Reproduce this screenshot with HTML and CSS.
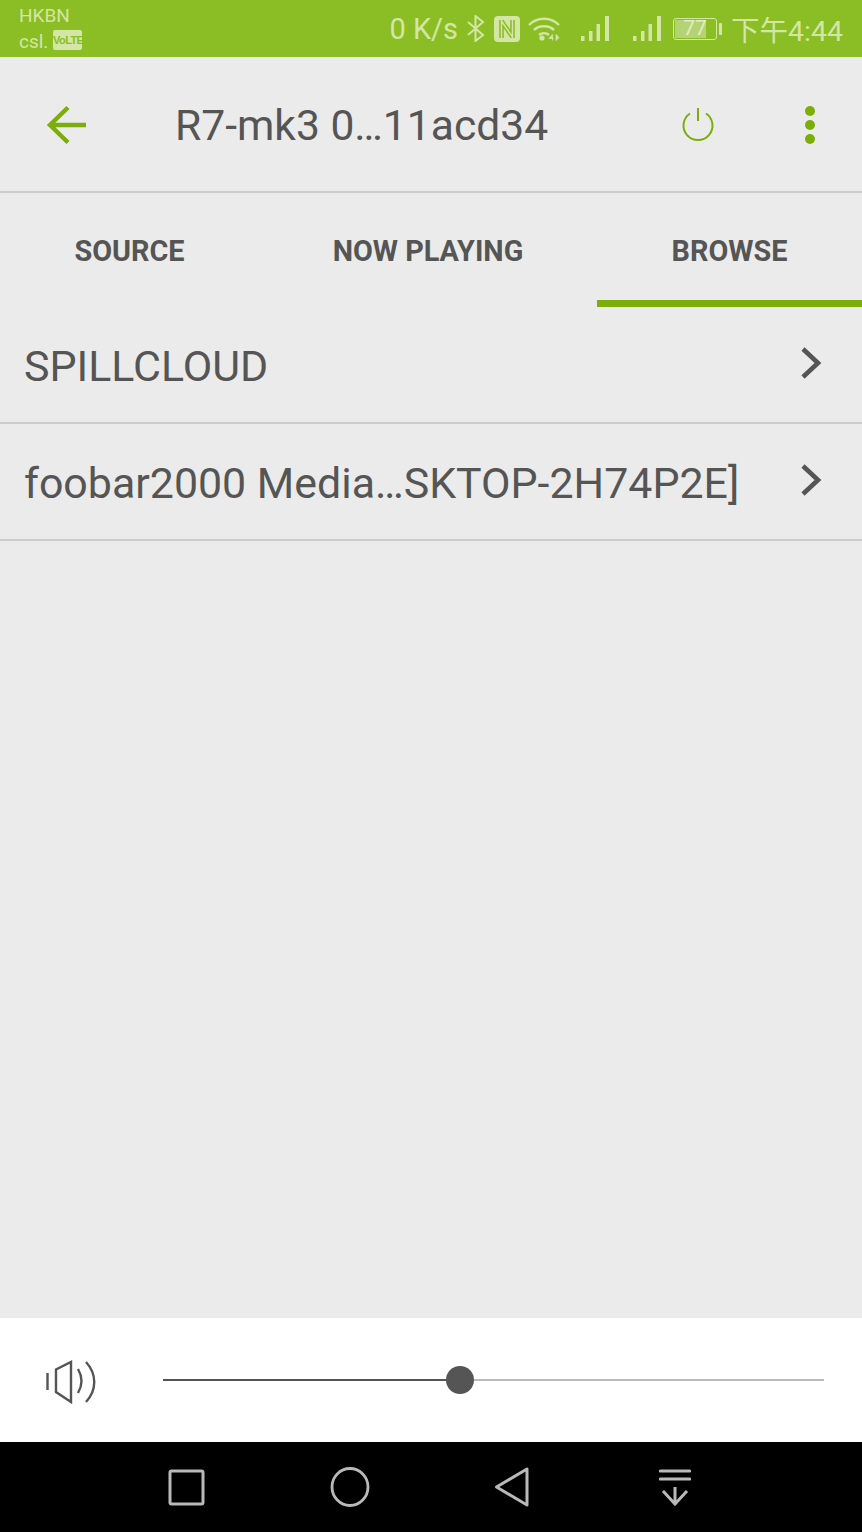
FILE: index.html
```html
<!DOCTYPE html>
<html lang="en">
<head>
<meta charset="UTF-8">
<title>R7-mk3 Browse</title>
<link rel="stylesheet" href="styles.css">
</head>
<body>
<div class="phone">

  <!-- status bar -->
  <div class="statusbar">
    <div class="carriers">
      <div class="carrier">HKBN</div>
      <div class="carrier">csl. <span class="volte">VoLTE</span></div>
    </div>
    <div class="status-right">
      <span class="speed">0 K/s</span>
      <svg class="ic-bt" width="19" height="27" viewBox="0 0 19 27"><path d="M2 7l15 13-7.500 6V1L17 7 2 20" fill="none" stroke="#d3e6a6" stroke-width="2"/></svg>
      <svg class="ic-nfc" width="26" height="26" viewBox="0 0 26 26"><rect width="26" height="26" rx="4" fill="#d3e6a6"/><path d="M7.500 4v18M18.500 4v18M7.500 5l11 16" fill="none" stroke="#8bbd25" stroke-width="4.600"/><path d="M7.500 3v20M18.500 3v20M7.500 5l11 16" fill="none" stroke="#d3e6a6" stroke-width="1.500"/></svg>
      <svg class="ic-wifi" width="32" height="24" viewBox="0 0 32 24"><path d="M1 8c8-8.500 22-8.500 30 0M6 13c5-5 15-5 20 0M11 18c3-2.500 7-2.500 10 0" fill="none" stroke="#d3e6a6" stroke-width="2.500"/><circle cx="14" cy="21" r="2.600" fill="#d3e6a6"/><path d="M24.500 23.500v-6l-3.500 4h4.500M28 17.500l3 3-3 3z" fill="#d3e6a6" stroke="#d3e6a6" stroke-width="0.800"/></svg>
      <svg class="ic-signal" width="28" height="25" viewBox="0 0 28 25"><path d="M0 20h3.500v5H0zM8 15h3.500v10H8zM15.500 8H19v17h-3.500zM24 0h4v25h-4z" fill="#d3e6a6"/></svg>
      <svg class="ic-signal" width="28" height="25" viewBox="0 0 28 25"><path d="M0 20h3.500v5H0zM8 15h3.500v10H8zM15.500 8H19v17h-3.500zM24 0h4v25h-4z" fill="#d3e6a6"/></svg>
      <div class="battery">
        <div class="battery-body"><div class="battery-fill" style="width:77%"></div><span class="battery-num">77</span></div>
        <div class="battery-tip"></div>
      </div>
      <span class="clock">下午4:44</span>
    </div>
  </div>

  <!-- title bar -->
  <div class="appbar">
    <svg class="back" width="42" height="40" viewBox="0 0 42 40"><path d="M22 2.500L4 20l18 17.500M4 20h36" fill="none" stroke="#7cae0a" stroke-width="4.400"/></svg>
    <div class="title">R7-mk3 0…11acd34</div>
    <svg class="power" width="34" height="36" viewBox="0 0 34 36"><path d="M9 6.500a14.500 14.500 0 1 0 16 0M17 1v13" fill="none" stroke="#7cae0a" stroke-width="2"/></svg>
    <div class="more"><i></i><i></i><i></i></div>
  </div>

  <!-- tabs -->
  <div class="tabs">
    <div class="tab tab-source">SOURCE</div>
    <div class="tab tab-playing">NOW PLAYING</div>
    <div class="tab tab-browse active">BROWSE</div>
  </div>

  <!-- list -->
  <div class="list">
    <div class="row">
      <span>SPILLCLOUD</span>
      <svg width="22" height="32" viewBox="0 0 22 32"><path d="M3 2l15 14L3 30" fill="none" stroke="#555" stroke-width="4.600"/></svg>
    </div>
    <div class="row">
      <span>foobar2000 Media…SKTOP-2H74P2E]</span>
      <svg width="22" height="32" viewBox="0 0 22 32"><path d="M3 2l15 14L3 30" fill="none" stroke="#555" stroke-width="4.600"/></svg>
    </div>
  </div>

  <!-- volume -->
  <div class="volume">
    <svg class="speaker" width="52" height="44" viewBox="0 0 52 44"><path d="M3.500 13v17M12 9.500V32l15 10V2zM34 9q7 12 0 24M42 2c11 12 11 28 0 40" fill="none" stroke="#555" stroke-width="2.400"/></svg>
    <div class="slider">
      <div class="slider-on"></div>
      <div class="slider-knob"></div>
      <div class="slider-off"></div>
    </div>
  </div>

  <!-- android nav -->
  <div class="navbar">
    <svg width="38" height="37" viewBox="0 0 38 37"><rect x="2" y="2" width="33" height="33" rx="1.500" fill="none" stroke="#b9b9b9" stroke-width="3"/></svg>
    <svg width="40" height="40" viewBox="0 0 40 40"><ellipse cx="20" cy="20" rx="18" ry="18.500" fill="none" stroke="#b9b9b9" stroke-width="2.800"/></svg>
    <svg width="36" height="40" viewBox="0 0 36 40"><path d="M2.500 20L33 2v36z" fill="none" stroke="#b9b9b9" stroke-width="3" stroke-linejoin="round"/></svg>
    <svg class="nav-down" width="32" height="38" viewBox="0 0 32 38"><path d="M1.500 3h29M1.500 11h29" fill="none" stroke="#b9b9b9" stroke-width="3.200" stroke-linecap="round"/><path d="M16 19v16M4 23l12 13 12-13" fill="none" stroke="#b9b9b9" stroke-width="3"/></svg>
  </div>
</div>
</body>
</html>
```

FILE: styles.css
```css
html, body {margin:0;padding:0;}
body {font-family:Roboto,"Liberation Sans",sans-serif;background:#ebebeb;color:#555;}
.phone {width:862px;height:1532px;display:flex;flex-direction:column;overflow:hidden;}

.statusbar {height:57px;background:#8bbd25;color:#d3e6a6;display:flex;justify-content:space-between;align-items:flex-start;padding:0 19px;box-sizing:border-box;flex:none;}
.carriers {padding-top:4px;font-size:19px;line-height:23px;}
.carrier {height:26px;white-space:nowrap;}
.volte {display:inline-block;background:#d3e6a6;color:#8bbd25;font-family:"Liberation Sans",sans-serif;font-size:11px;line-height:20px;height:20px;width:29px;text-align:center;border-radius:2px;font-weight:bold;vertical-align:-2px;letter-spacing:-0.6px;overflow:hidden;}
.status-right {display:flex;align-items:center;height:57px;box-sizing:border-box;}
.speed {font-size:29px;margin-right:8px;}
.ic-bt {margin-right:9px;}
.ic-nfc {margin-right:8px;}
.ic-wifi {margin-right:21px;}
.ic-signal {margin-right:24px;}
.ic-signal + .battery {margin-left:-12px;}
.battery {display:flex;align-items:center;margin-right:9px;}
.battery-body {position:relative;width:44px;height:22px;border:1.5px solid #d3e6a6;border-radius:3px;padding:1px;box-sizing:border-box;}
.battery-fill {height:100%;background:#b4d374;}
.battery-num {position:absolute;left:0;right:0;top:-3px;text-align:center;font-size:21px;line-height:25px;color:#e0eec0;}
.battery-tip {width:3px;height:12px;background:#d3e6a6;margin-left:2px;border-radius:1px;}
.clock {font-size:28.5px;font-family:Roboto,"Noto Sans CJK TC",sans-serif;}

.appbar {height:135px;margin-top:1px;flex:none;display:flex;align-items:center;box-sizing:border-box;border-bottom:2px solid #ccc;padding:0 0 0 46px;}
.back {margin-right:87px;}
.title {font-size:42.6px;width:506px;white-space:nowrap;}
.power {margin-right:90px;}
.more i {display:block;width:10px;height:10px;border-radius:50%;background:#7cae0a;margin:4px 0;}

.tabs {height:114px;display:flex;flex:none;box-sizing:border-box;font-weight:bold;font-size:28.8px;}
.tab {display:flex;align-items:center;justify-content:center;box-sizing:border-box;height:114px;padding-top:1px;}
.tab-source {width:259px;}
.tab-playing {width:338px;}
.tab-browse {width:265px;}
.tab.active {border-bottom:7px solid #7cae0a;padding:8px 0 0;}

.list {flex:1;}
.row {height:117px;border-bottom:2px solid #ccc;display:flex;align-items:center;justify-content:space-between;padding:0 40px 0 24px;font-size:42.9px;box-sizing:border-box;}
.row span {padding-top:2px;}
.row svg {margin-bottom:4px;}

.volume {height:124px;background:#fff;flex:none;display:flex;align-items:center;padding:0 38px 0 44px;}
.speaker {margin-right:67px;margin-top:4px;}
.slider {flex:1;display:flex;align-items:center;}
.slider-on {width:283px;height:2px;background:#555;}
.slider-knob {width:28px;height:28px;border-radius:50%;background:#555;}
.slider-off {flex:1;height:2px;background:#bbb;}

.navbar {height:90px;background:#000;flex:none;display:flex;align-items:center;padding:0 0 0 168px;gap:124px;}
.nav-down {margin-left:5px;}
```
